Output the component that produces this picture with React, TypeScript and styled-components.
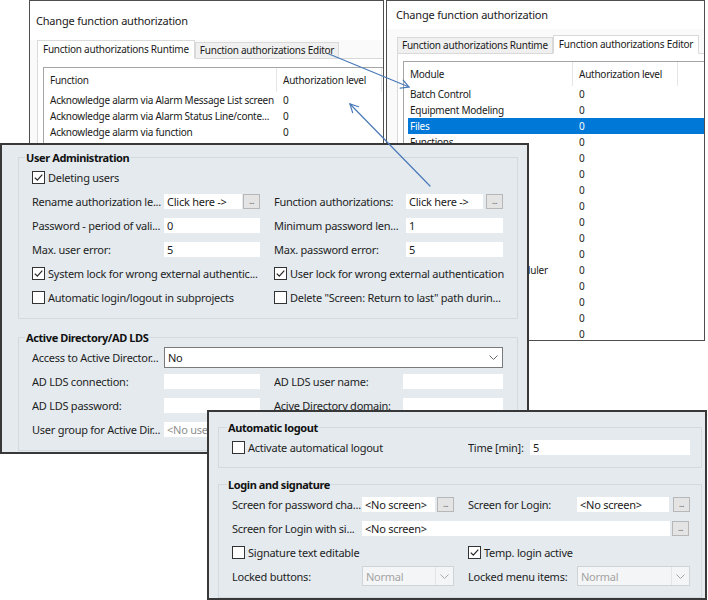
import React from "react";
import styled, { createGlobalStyle } from "styled-components";

const FONT = `"Noto Sans", "Segoe UI", "Liberation Sans", Arial, sans-serif`;

const GlobalStyle = createGlobalStyle`
  html, body { margin: 0; padding: 0; background: #ffffff; }
  body { font-family: ${FONT}; font-size: 11px; letter-spacing: -0.25px; color: #1b1b1b; overflow: hidden; }
  * { box-sizing: border-box; }
`;

const Desktop = styled.div`
  position: relative;
  width: 708px;
  height: 600px;
  overflow: hidden;
  background: #ffffff;
`;

type WinProps = { $x: number; $y: number; $w: number; $h: number; $z: number };

const DialogWindow = styled.section<WinProps>`
  position: absolute;
  left: ${(p) => p.$x}px;
  top: ${(p) => p.$y}px;
  width: ${(p) => p.$w}px;
  height: ${(p) => p.$h}px;
  z-index: ${(p) => p.$z};
  display: flex;
  flex-direction: column;
  overflow: hidden;
  background: #fafafa;
  border: 1px solid #4e4e4e;
`;

const PropertyWindow = styled.section<WinProps & { $pad: string }>`
  position: absolute;
  left: ${(p) => p.$x}px;
  top: ${(p) => p.$y}px;
  width: ${(p) => p.$w}px;
  height: ${(p) => p.$h}px;
  z-index: ${(p) => p.$z};
  display: flex;
  flex-direction: column;
  overflow: hidden;
  padding: ${(p) => p.$pad};
  background: #e4eaee;
  border: 2px solid #383838;
`;

const DialogTitle = styled.div<{ $h: number; $pl: number }>`
  flex: none;
  height: ${(p) => p.$h}px;
  line-height: ${(p) => p.$h}px;
  padding-left: ${(p) => p.$pl}px;
  background: #ffffff;
  font-size: 11px;
  letter-spacing: -0.2px;
  color: #1a1a1a;
  white-space: nowrap;
`;

const TabStrip = styled.div<{ $h: number; $ml: number }>`
  flex: none;
  position: relative;
  z-index: 1;
  display: flex;
  align-items: flex-end;
  height: ${(p) => p.$h}px;
  padding-left: ${(p) => p.$ml}px;
`;

const Tab = styled.div<{ $active?: boolean }>`
  height: ${(p) => (p.$active ? 19 : 16)}px;
  line-height: ${(p) => (p.$active ? 17 : 14)}px;
  padding: 0 ${(p) => (p.$active ? 5 : 4)}px;
  margin-bottom: ${(p) => (p.$active ? -1 : 0)}px;
  font-size: 10px;
  white-space: nowrap;
  color: #1a1a1a;
  border: 1px solid #d9d9d9;
  border-bottom: ${(p) => (p.$active ? "1px solid #ffffff" : "none")};
  background: ${(p) => (p.$active ? "#ffffff" : "#f0f0f0")};
`;

const TabPanel = styled.div<{ $ml: number; $pt: number }>`
  position: relative;
  flex: 1;
  display: flex;
  flex-direction: column;
  margin-left: ${(p) => p.$ml}px;
  padding: ${(p) => p.$pt}px 0 0 5px;
  background: #ffffff;
  border-top: 1px solid #d9d9d9;
  border-left: 1px solid #d9d9d9;
`;

const ListBox = styled.div`
  flex: 1;
  overflow: hidden;
  background: #ffffff;
  border-top: 1px solid #a5a5a5;
  border-left: 1px solid #a5a5a5;
  padding-left: 4px;
  font-size: 10px;
`;

const ListHeader = styled.div<{ $cols: string }>`
  display: grid;
  grid-template-columns: ${(p) => p.$cols};
  height: 24px;
`;

const HeaderCell = styled.div`
  line-height: 24px;
  padding-left: 6px;
  white-space: nowrap;
  overflow: hidden;
  border-right: 1px solid #e6e6e6;
  &:first-child { padding-left: 2px; }
`;

const ListRow = styled.div<{ $cols: string; $selected?: boolean }>`
  display: grid;
  grid-template-columns: ${(p) => p.$cols};
  height: 16px;
  line-height: 16px;
  background: ${(p) => (p.$selected ? "#0078d7" : "transparent")};
  color: ${(p) => (p.$selected ? "#ffffff" : "#1a1a1a")};
`;

const Cell = styled.div`
  padding-left: 6px;
  white-space: nowrap;
  overflow: visible;
  &:first-child { padding-left: 2px; }
`;

const Group = styled.fieldset<{ $mt: number; $pb: number }>`
  flex: none;
  min-width: 0;
  margin: ${(p) => p.$mt}px 0 0 0;
  padding: 0 0 ${(p) => p.$pb}px 0;
  border: 1px solid #d3dadf;
`;

const GroupTitle = styled.legend<{ $ml: number }>`
  margin-left: ${(p) => p.$ml}px;
  padding: 0 1px;
  font-size: 11px;
  letter-spacing: -0.4px;
  line-height: 15px;
  font-weight: 700;
  color: #111111;
`;

const GroupBody = styled.div<{ $pl: number }>`
  display: flex;
  flex-direction: column;
  padding-left: ${(p) => p.$pl}px;
`;

const FormRow = styled.div`
  display: flex;
  align-items: center;
  gap: 14px;
  height: 24px;
`;

const Half = styled.div<{ $cols: string }>`
  display: grid;
  grid-template-columns: ${(p) => p.$cols};
  align-items: center;
`;

const Label = styled.span`
  white-space: nowrap;
  overflow: hidden;
  color: #1e1e1e;
`;

const Field = styled.div<{ $muted?: boolean }>`
  height: 15px;
  line-height: 15px;
  padding: 0 3px;
  background: #ffffff;
  white-space: nowrap;
  overflow: hidden;
  color: ${(p) => (p.$muted ? "#8e8e8e" : "#1b1b1b")};
`;

const FieldWithButton = styled.div<{ $gap: number }>`
  display: flex;
  align-items: center;
  gap: ${(p) => p.$gap}px;
  & > ${Field} { flex: 1; min-width: 0; }
`;

const DotsButton = styled.div`
  flex: none;
  width: 17px;
  height: 15px;
  border: 1px solid #b7b7b7;
  background: #e4e4e4;
  color: #555555;
  font-size: 8px;
  line-height: 11px;
  text-align: center;
  letter-spacing: -0.5px;
`;

const CheckItem = styled.div`
  grid-column: 1 / -1;
  display: flex;
  align-items: center;
  gap: 3px;
  white-space: nowrap;
  color: #1e1e1e;
`;

const CheckBox = styled.span`
  flex: none;
  width: 13px;
  height: 13px;
  display: inline-flex;
  align-items: center;
  justify-content: center;
  background: #ffffff;
  border: 1px solid #333333;
`;

const Select = styled.div<{ $disabled?: boolean; $h: number }>`
  height: ${(p) => p.$h}px;
  display: flex;
  align-items: center;
  padding-left: 3px;
  background: ${(p) => (p.$disabled ? "#f4f5f6" : "#ffffff")};
  border: 1px solid ${(p) => (p.$disabled ? "#cfd3d6" : "#7a7a7a")};
  color: ${(p) => (p.$disabled ? "#a3a3a3" : "#1b1b1b")};
`;

const SelectText = styled.span`
  flex: 1;
  white-space: nowrap;
`;

const SelectArrow = styled.span<{ $divided?: boolean }>`
  flex: none;
  width: 18px;
  align-self: stretch;
  display: flex;
  align-items: center;
  justify-content: center;
  border-left: ${(p) => (p.$divided ? "1px solid #e2e4e6" : "none")};
`;

const ArrowLayer = styled.svg`
  position: absolute;
  left: 0;
  top: 0;
  width: 708px;
  height: 600px;
  z-index: 10;
  pointer-events: none;
`;

const Check = ({ on }: { on?: boolean }) => (
  <CheckBox>
    {on && (
      <svg width="11" height="11" viewBox="0 0 11 11">
        <path d="M1.8 5.6 L4.3 8.1 L9.3 2.6" fill="none" stroke="#2b2b2b" strokeWidth="1.3" />
      </svg>
    )}
  </CheckBox>
);

const Chevron = ({ color }: { color: string }) => (
  <svg width="9" height="5" viewBox="0 0 9 5">
    <path d="M0.5 0.5 L4.5 4.5 L8.5 0.5" fill="none" stroke={color} strokeWidth="1" />
  </svg>
);

const colsA = "229px 105px";
const colsB = "165px 105px";

const runtimeRows: [string, string][] = [
  ["Acknowledge alarm via Alarm Message List screen", "0"],
  ["Acknowledge alarm via Alarm Status Line/conte...", "0"],
  ["Acknowledge alarm via function", "0"],
  ["Acknowledge alarm via line", "0"],
];

const editorRows: string[] = [
  "Batch Control",
  "Equipment Modeling",
  "Files",
  "Functions",
  "Historian",
  "Interlockings",
  "Menus",
  "Message Control",
  "Recipes",
  "Reports",
  "Screens",
  "Production & Facility Scheduler",
  "Scripts",
  "Variables",
  "Workspace",
  "Fonts",
];

const C_L = "132px 96px";
const C_R = "132px 97px";
const D_L = "130px 92px";
const D_R = "109px 113px";

export default function App() {
  return (
    <Desktop>
      <GlobalStyle />

      <DialogWindow $x={29} $y={0} $w={355} $h={160} $z={1}>
        <DialogTitle $h={39} $pl={6}>Change function authorization</DialogTitle>
        <TabStrip $h={18} $ml={7}>
          <Tab $active>Function authorizations Runtime</Tab>
          <Tab>Function authorizations Editor</Tab>
        </TabStrip>
        <TabPanel $ml={7} $pt={8}>
          <ListBox>
            <ListHeader $cols={colsA}>
              <HeaderCell>Function</HeaderCell>
              <HeaderCell>Authorization level</HeaderCell>
            </ListHeader>
            {runtimeRows.map(([name, lvl]) => (
              <ListRow key={name} $cols={colsA}>
                <Cell>{name}</Cell>
                <Cell>{lvl}</Cell>
              </ListRow>
            ))}
          </ListBox>
        </TabPanel>
      </DialogWindow>

      <DialogWindow $x={386} $y={0} $w={319} $h={341} $z={2}>
        <DialogTitle $h={28} $pl={9}>Change function authorization</DialogTitle>
        <TabStrip $h={24} $ml={10}>
          <Tab>Function authorizations Runtime</Tab>
          <Tab $active>Function authorizations Editor</Tab>
        </TabStrip>
        <TabPanel $ml={10} $pt={7}>
          <ListBox>
            <ListHeader $cols={colsB}>
              <HeaderCell>Module</HeaderCell>
              <HeaderCell>Authorization level</HeaderCell>
            </ListHeader>
            {editorRows.map((name) => (
              <ListRow key={name} $cols={colsB} $selected={name === "Files"}>
                <Cell>{name}</Cell>
                <Cell>0</Cell>
              </ListRow>
            ))}
          </ListBox>
        </TabPanel>
      </DialogWindow>

      <PropertyWindow $x={0} $y={143} $w={529} $h={311} $z={3} $pad="5px 9px 0 16px">
        <Group $mt={0} $pb={9}>
          <GroupTitle $ml={6}>User Administration</GroupTitle>
          <GroupBody $pl={13}>
            <FormRow>
              <Half $cols={C_L}>
                <CheckItem><Check on />Deleting users</CheckItem>
              </Half>
            </FormRow>
            <FormRow>
              <Half $cols={C_L}>
                <Label>Rename authorization le...</Label>
                <FieldWithButton $gap={1}>
                  <Field>Click here -&gt;</Field>
                  <DotsButton>...</DotsButton>
                </FieldWithButton>
              </Half>
              <Half $cols={C_R}>
                <Label>Function authorizations:</Label>
                <FieldWithButton $gap={3}>
                  <Field>Click here -&gt;</Field>
                  <DotsButton>...</DotsButton>
                </FieldWithButton>
              </Half>
            </FormRow>
            <FormRow>
              <Half $cols={C_L}>
                <Label>Password - period of vali...</Label>
                <Field>0</Field>
              </Half>
              <Half $cols={C_R}>
                <Label>Minimum password len...</Label>
                <Field>1</Field>
              </Half>
            </FormRow>
            <FormRow>
              <Half $cols={C_L}>
                <Label>Max. user error:</Label>
                <Field>5</Field>
              </Half>
              <Half $cols={C_R}>
                <Label>Max. password error:</Label>
                <Field>5</Field>
              </Half>
            </FormRow>
            <FormRow>
              <Half $cols={C_L}>
                <CheckItem><Check on />System lock for wrong external authentic...</CheckItem>
              </Half>
              <Half $cols={C_R}>
                <CheckItem><Check on />User lock for wrong external authentication</CheckItem>
              </Half>
            </FormRow>
            <FormRow>
              <Half $cols={C_L}>
                <CheckItem><Check />Automatic login/logout in subprojects</CheckItem>
              </Half>
              <Half $cols={C_R}>
                <CheckItem><Check />Delete "Screen: Return to last" path durin...</CheckItem>
              </Half>
            </FormRow>
          </GroupBody>
        </Group>

        <Group $mt={11} $pb={9}>
          <GroupTitle $ml={6}>Active Directory/AD LDS</GroupTitle>
          <GroupBody $pl={13}>
            <FormRow>
              <Half $cols="132px 339px">
                <Label>Access to Active Director...</Label>
                <Select $h={21}>
                  <SelectText>No</SelectText>
                  <SelectArrow><Chevron color="#6a6a6a" /></SelectArrow>
                </Select>
              </Half>
            </FormRow>
            <FormRow>
              <Half $cols={C_L}>
                <Label>AD LDS connection:</Label>
                <Field />
              </Half>
              <Half $cols="129px 100px">
                <Label>AD LDS user name:</Label>
                <Field />
              </Half>
            </FormRow>
            <FormRow>
              <Half $cols={C_L}>
                <Label>AD LDS password:</Label>
                <Field />
              </Half>
              <Half $cols="129px 100px">
                <Label>Acive Directory domain:</Label>
                <Field />
              </Half>
            </FormRow>
            <FormRow>
              <Half $cols={C_L}>
                <Label>User group for Active Dir...</Label>
                <Field $muted>&lt;No user group&gt;</Field>
              </Half>
            </FormRow>
          </GroupBody>
        </Group>
      </PropertyWindow>

      <PropertyWindow $x={207} $y={410} $w={500} $h={190} $z={4} $pad="8px 3px 0 9px">
        <Group $mt={0} $pb={8}>
          <GroupTitle $ml={8}>Automatic logout</GroupTitle>
          <GroupBody $pl={13}>
            <FormRow>
              <Half $cols={D_L}>
                <CheckItem><Check />Activate automatical logout</CheckItem>
              </Half>
              <Half $cols="62px 160px">
                <Label>Time [min]:</Label>
                <Field>5</Field>
              </Half>
            </FormRow>
          </GroupBody>
        </Group>

        <Group $mt={9} $pb={9}>
          <GroupTitle $ml={8}>Login and signature</GroupTitle>
          <GroupBody $pl={13}>
            <FormRow>
              <Half $cols={D_L}>
                <Label>Screen for password cha...</Label>
                <FieldWithButton $gap={2}>
                  <Field>&lt;No screen&gt;</Field>
                  <DotsButton>...</DotsButton>
                </FieldWithButton>
              </Half>
              <Half $cols={D_R}>
                <Label>Screen for Login:</Label>
                <FieldWithButton $gap={4}>
                  <Field>&lt;No screen&gt;</Field>
                  <DotsButton>...</DotsButton>
                </FieldWithButton>
              </Half>
            </FormRow>
            <FormRow>
              <Half $cols="130px 327px">
                <Label>Screen for Login with si...</Label>
                <FieldWithButton $gap={2}>
                  <Field>&lt;No screen&gt;</Field>
                  <DotsButton>...</DotsButton>
                </FieldWithButton>
              </Half>
            </FormRow>
            <FormRow>
              <Half $cols={D_L}>
                <CheckItem><Check />Signature text editable</CheckItem>
              </Half>
              <Half $cols={D_R}>
                <CheckItem><Check on />Temp. login active</CheckItem>
              </Half>
            </FormRow>
            <FormRow>
              <Half $cols={D_L}>
                <Label>Locked buttons:</Label>
                <Select $h={20} $disabled>
                  <SelectText>Normal</SelectText>
                  <SelectArrow $divided><Chevron color="#a8a8a8" /></SelectArrow>
                </Select>
              </Half>
              <Half $cols={D_R}>
                <Label>Locked menu items:</Label>
                <Select $h={20} $disabled>
                  <SelectText>Normal</SelectText>
                  <SelectArrow $divided><Chevron color="#a8a8a8" /></SelectArrow>
                </Select>
              </Half>
            </FormRow>
          </GroupBody>
        </Group>
      </PropertyWindow>

      <ArrowLayer viewBox="0 0 708 600">
        <g fill="none" stroke="#4a7ab8" strokeWidth="1.2" strokeLinecap="round">
          <line x1="329" y1="54" x2="409" y2="87" />
          <polyline points="400.2,88.2 409,87 403.2,80.1" />
          <line x1="430" y1="186" x2="350" y2="104" />
          <polyline points="358.6,106.7 350,104 352.6,112.6" />
        </g>
      </ArrowLayer>
    </Desktop>
  );
}
